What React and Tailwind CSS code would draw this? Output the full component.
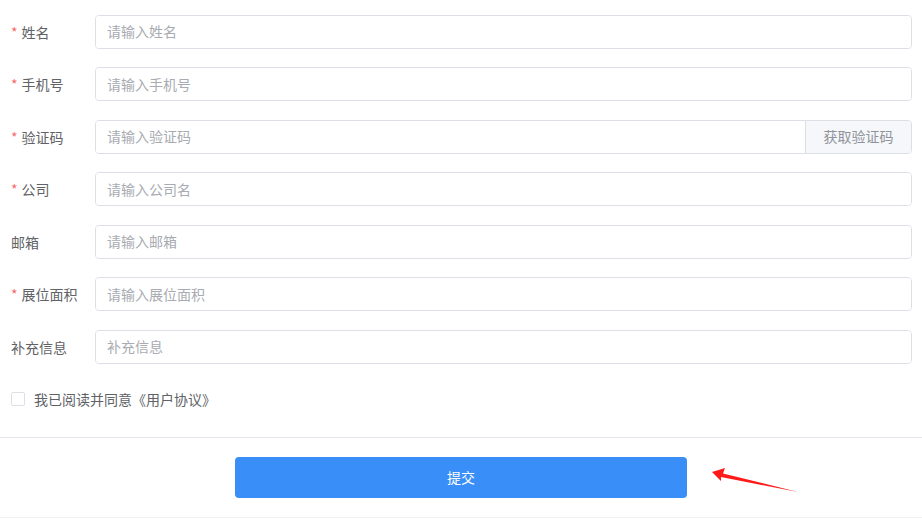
import React from "react";

const rows = [
  { label: "姓名", ph: "请输入姓名", req: true },
  { label: "手机号", ph: "请输入手机号", req: true },
  { label: "验证码", ph: "请输入验证码", req: true, code: true },
  { label: "公司", ph: "请输入公司名", req: true },
  { label: "邮箱", ph: "请输入邮箱", req: false },
  { label: "展位面积", ph: "请输入展位面积", req: true },
  { label: "补充信息", ph: "补充信息", req: false },
];

export default function App() {
  return (
    <div
      className="relative w-[922px] h-[519px] bg-white overflow-hidden"
      style={{ fontFamily: '"Noto Sans CJK SC", "Noto Sans", sans-serif' }}
    >
      <div className="flex flex-col gap-[18.5px] pt-[14.5px] pl-[11px]">
        {rows.map((r) => (
          <div key={r.label} className="flex items-center h-[34px]">
            <div className="w-[84px] shrink-0 flex items-center text-[14px] text-[#606266] leading-none">
              {r.req && <span className="text-[#f56c6c] mr-[4px]">*</span>}
              <span>{r.label}</span>
            </div>
            <div className="w-[817px] shrink-0 flex h-[34px] border border-[#dcdfe6] rounded-[4px] overflow-hidden">
              <input
                className="min-w-0 flex-1 px-[11px] text-[14px] text-[#606266] placeholder:text-[#a8abb2] outline-none bg-white"
                placeholder={r.ph}
              />
              {r.code && (
                <div className="w-[106px] shrink-0 flex items-center justify-center bg-[#f5f7fa] border-l border-[#dcdfe6] text-[14px] text-[#909399]">
                  获取验证码
                </div>
              )}
            </div>
          </div>
        ))}
      </div>
      <div className="flex items-center mt-[28px] pl-[11px] h-[15px]">
        <span className="w-[14px] h-[14px] border border-[#dcdfe6] rounded-[2px] bg-white" />
        <span className="ml-[9px] text-[14px] text-[#606266] leading-none">我已阅读并同意《用户协议》</span>
      </div>
      <div className="mt-[30.5px] h-px bg-[#e4e7ed]" />
      <div className="flex justify-center mt-[19px]">
        <button className="w-[452px] h-[41px] rounded-[4px] bg-[#3a8ef8] text-white text-[14px]">提交</button>
      </div>
      <div className="mt-[19px] h-px bg-[#f2f2f2]" />
      <svg className="absolute left-[708px] top-[464px]" width="94" height="32" viewBox="0 0 94 32">
        <polygon points="4,8 17,4 15,9.5 90,28 13,13 13,17" fill="#ff1a1a" />
      </svg>
    </div>
  );
}
